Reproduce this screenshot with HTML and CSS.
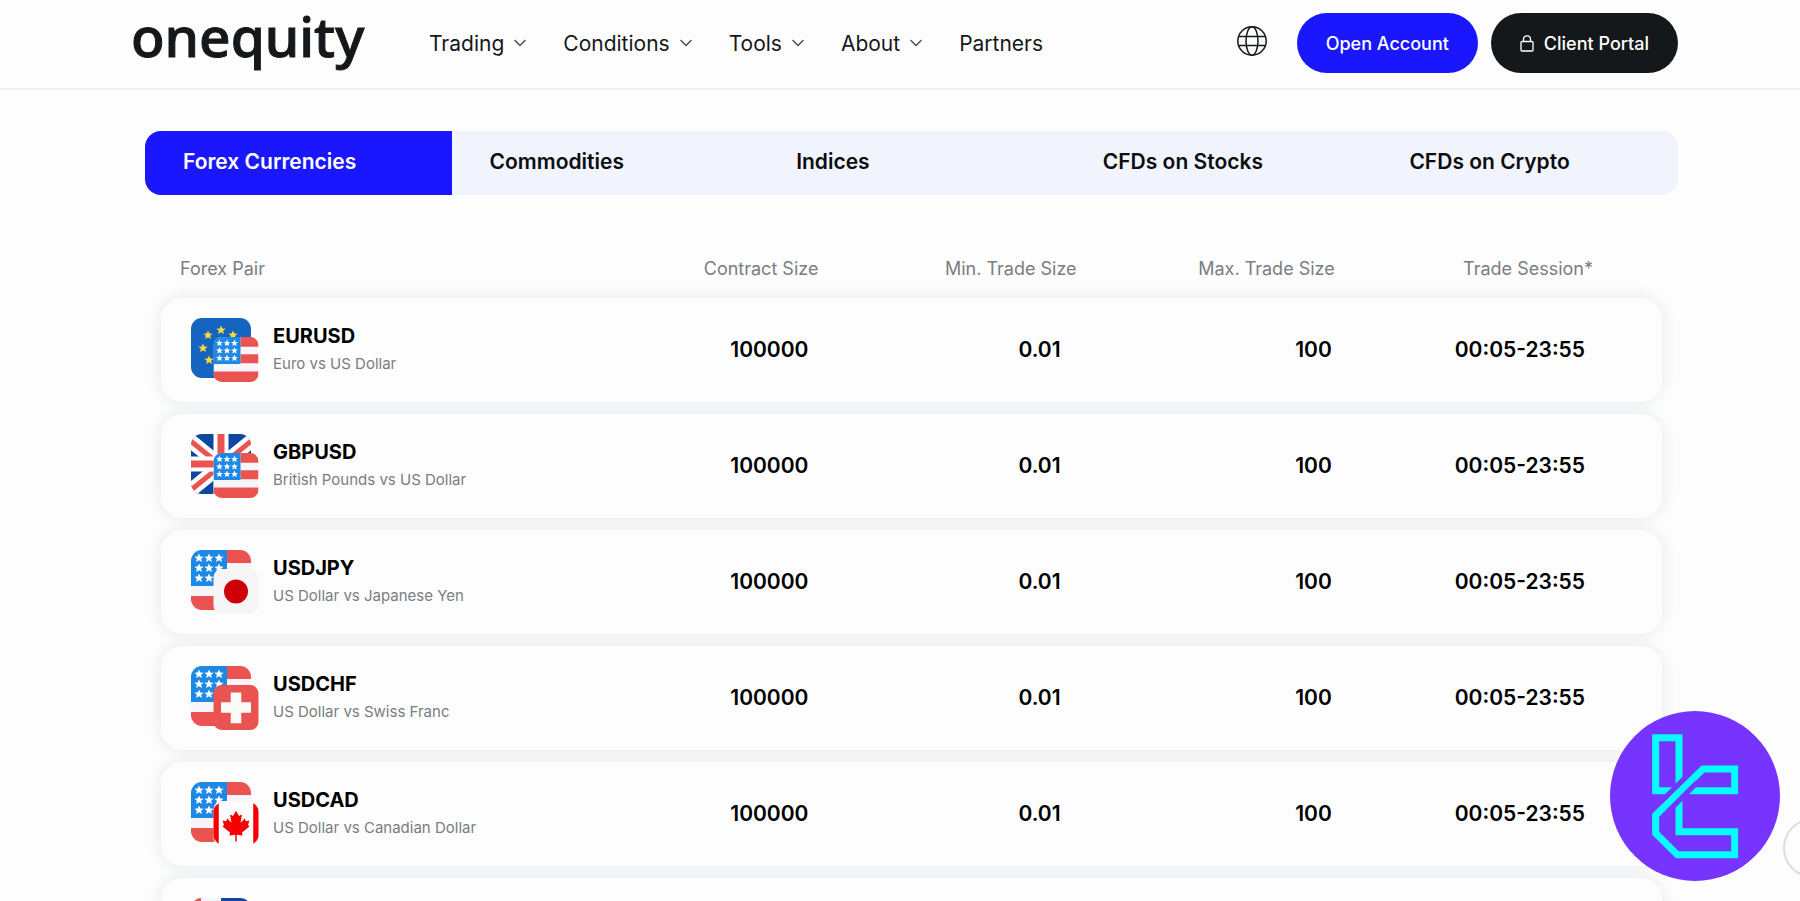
FILE: index.html
```
<!DOCTYPE html>
<html lang="en">
<head>
    <meta charset="UTF-8">
    <meta name="viewport" content="width=device-width, initial-scale=1.0">
    <title>Onequity - Forex Currencies</title>
    <link rel="stylesheet" href="styles.css">
</head>
<body>
    <!-- Shared flags -->
    <svg class="sprite" aria-hidden="true">
        <defs>
            <clipPath id="round"><rect width="60" height="60" rx="11"/></clipPath>
            <path id="star" d="M0-4.6 1.3-1.5 4.6-1.3 2.1.8 2.900 4 0 2.200-2.900 4-2.100.8-4.600-1.300-1.300-1.500z"/>
            <symbol id="us" viewBox="0 0 60 60">
                <g clip-path="url(#round)">
                    <rect width="60" height="60" fill="#f6f6fa"/>
                    <path fill="#eb5350" d="M36 0h24v13H36zM36 23h24v12H36zM0 46h60v14H0z"/>
                    <rect width="36" height="36" fill="#1e88e5"/>
                    <g fill="#fff">
                        <use href="#star" x="8" y="8"/><use href="#star" x="18" y="8"/><use href="#star" x="28" y="8"/>
                        <use href="#star" x="8" y="18"/><use href="#star" x="18" y="18"/><use href="#star" x="28" y="18"/>
                        <use href="#star" x="8" y="28"/><use href="#star" x="18" y="28"/><use href="#star" x="28" y="28"/>
                    </g>
                </g>
            </symbol>
            <symbol id="eu" viewBox="0 0 60 60">
                <rect width="60" height="60" rx="11" fill="#1565c0"/>
                <g fill="#fddb3a">
                    <use href="#star" x="30" y="12"/><use href="#star" x="42" y="17"/><use href="#star" x="48" y="30"/>
                    <use href="#star" x="43" y="42"/><use href="#star" x="30" y="47"/><use href="#star" x="18" y="42"/>
                    <use href="#star" x="12" y="30"/><use href="#star" x="17" y="17"/>
                </g>
            </symbol>
            <symbol id="gb" viewBox="0 0 60 60">
                <g clip-path="url(#round)">
                    <rect width="60" height="60" fill="#0d47a1"/>
                    <path stroke="#fff" stroke-width="14" d="M-4 4 60 56M64 4 0 56"/>
                    <path stroke="#eb5350" stroke-width="5" d="M-4 4 60 56M64 4 0 56"/>
                    <path stroke="#fff" stroke-width="15" d="M30 0v60M0 30h60"/>
                    <path stroke="#eb5350" stroke-width="7" d="M30 0v60M0 30h60"/>
                </g>
            </symbol>
            <symbol id="jp" viewBox="0 0 60 60">
                <rect width="60" height="60" rx="11" fill="#f6f6f6"/>
                <circle cx="30" cy="30" r="16" fill="#d00009"/>
            </symbol>
            <symbol id="ch" viewBox="0 0 60 60">
                <rect width="60" height="60" rx="11" fill="#eb5350"/>
                <path fill="#fafafa" d="M23 10h14v13h13v14H37v14H23V37H10V23h13z"/>
            </symbol>
            <symbol id="ca" viewBox="0 0 60 60">
                <rect width="60" height="60" rx="11" fill="#fdfdfd"/>
                <path fill="#f50000" d="M7 3v54Q0 52 0 46V14Q0 7 7 3zM53 3v54Q60 52 60 46V14Q60 7 53 3z"/>
                <path fill="#f50000" d="m30 13-4 7-4-2 2 11-6-6-1 4-5-1 2 6-2 2 10 8-1 4 8-1v9h2v-9l8 1-1-4 10-8-2-2 2-6-5 1-1-4-6 6 2-11-4 2z"/>
            </symbol>
            <symbol id="au" viewBox="0 0 60 60">
                <g clip-path="url(#round)">
                    <rect width="60" height="60" fill="#0d47a1"/>
                    <rect width="30" height="30" fill="#f6f6fa"/>
                    <path fill="#eb5350" d="M0 0h10v3L0 8zM11 12h6v18h-6zM0 13h30v5H0z"/>
                    <g fill="#fff"><use href="#star" x="15" y="45"/><use href="#star" x="45" y="15"/></g>
                </g>
            </symbol>
            <symbol id="chevron" viewBox="0 0 12 8">
                <path fill="none" stroke="#45494d" stroke-width="1.3" d="m.5 1 5.500 5.500L11.500 1"/>
            </symbol>
        </defs>
    </svg>

    <header class="header">
        <div class="header-inner">
            <a class="logo" href="#">onequity</a>
            <nav class="nav">
                <a href="#">Trading <svg class="chevron"><use href="#chevron"/></svg></a>
                <a href="#">Conditions <svg class="chevron"><use href="#chevron"/></svg></a>
                <a href="#">Tools <svg class="chevron"><use href="#chevron"/></svg></a>
                <a href="#">About <svg class="chevron"><use href="#chevron"/></svg></a>
                <a href="#">Partners</a>
            </nav>
            <div class="actions">
                <button class="lang" aria-label="Language">
                    <svg width="30" height="30" viewBox="0 0 30 30" fill="none" stroke="#15181a" stroke-width="1.5">
                        <circle cx="15" cy="15" r="14.200"/>
                        <ellipse cx="15" cy="15" rx="6" ry="14.200"/>
                        <path d="M2 10.500h26M2 19.500h26"/>
                    </svg>
                </button>
                <button class="btn btn-open">Open Account</button>
                <button class="btn btn-portal">
                    <svg width="14" height="17" viewBox="0 0 14 17" fill="none" stroke="#fff" stroke-width="1.3">
                        <rect x="1" y="6.500" width="12" height="9.500" rx="1"/>
                        <path d="M3.500 6.500V4a3.500 3.200 0 0 1 7 0v2.500"/>
                    </svg>
                    Client Portal
                </button>
            </div>
        </div>
    </header>

    <main class="main">
        <div class="tabs">
            <button class="tab active">Forex Currencies</button>
            <button class="tab">Commodities</button>
            <button class="tab">Indices</button>
            <button class="tab">CFDs on Stocks</button>
            <button class="tab">CFDs on Crypto</button>
        </div>

        <table class="pairs">
            <thead>
                <tr>
                    <th class="col-pair">Forex Pair</th>
                    <th class="col-size">Contract Size</th>
                    <th class="col-size">Min. Trade Size</th>
                    <th class="col-size">Max. Trade Size</th>
                    <th class="col-session">Trade Session*</th>
                </tr>
            </thead>
            <tbody>
                <tr>
                    <td>
                        <div class="pair">
                            <div class="flags"><svg class="flag-back"><use href="#eu"/></svg><svg class="flag-front"><use href="#us"/></svg></div>
                            <div><div class="symbol">EURUSD</div><div class="desc">Euro vs US Dollar</div></div>
                        </div>
                    </td>
                    <td class="contract">100000</td>
                    <td class="min">0.01</td>
                    <td class="max">100</td>
                    <td class="session">00:05-23:55</td>
                </tr>
                <tr>
                    <td>
                        <div class="pair">
                            <div class="flags"><svg class="flag-back"><use href="#gb"/></svg><svg class="flag-front"><use href="#us"/></svg></div>
                            <div><div class="symbol">GBPUSD</div><div class="desc">British Pounds vs US Dollar</div></div>
                        </div>
                    </td>
                    <td class="contract">100000</td>
                    <td class="min">0.01</td>
                    <td class="max">100</td>
                    <td class="session">00:05-23:55</td>
                </tr>
                <tr>
                    <td>
                        <div class="pair">
                            <div class="flags"><svg class="flag-back"><use href="#us"/></svg><svg class="flag-front"><use href="#jp"/></svg></div>
                            <div><div class="symbol">USDJPY</div><div class="desc">US Dollar vs Japanese Yen</div></div>
                        </div>
                    </td>
                    <td class="contract">100000</td>
                    <td class="min">0.01</td>
                    <td class="max">100</td>
                    <td class="session">00:05-23:55</td>
                </tr>
                <tr>
                    <td>
                        <div class="pair">
                            <div class="flags"><svg class="flag-back"><use href="#us"/></svg><svg class="flag-front"><use href="#ch"/></svg></div>
                            <div><div class="symbol">USDCHF</div><div class="desc">US Dollar vs Swiss Franc</div></div>
                        </div>
                    </td>
                    <td class="contract">100000</td>
                    <td class="min">0.01</td>
                    <td class="max">100</td>
                    <td class="session">00:05-23:55</td>
                </tr>
                <tr>
                    <td>
                        <div class="pair">
                            <div class="flags"><svg class="flag-back"><use href="#us"/></svg><svg class="flag-front"><use href="#ca"/></svg></div>
                            <div><div class="symbol">USDCAD</div><div class="desc">US Dollar vs Canadian Dollar</div></div>
                        </div>
                    </td>
                    <td class="contract">100000</td>
                    <td class="min">0.01</td>
                    <td class="max">100</td>
                    <td class="session">00:05-23:55</td>
                </tr>
                <tr>
                    <td>
                        <div class="pair">
                            <div class="flags"><svg class="flag-back"><use href="#au"/></svg><svg class="flag-front"><use href="#us"/></svg></div>
                        </div>
                    </td>
                    <td class="contract"></td>
                    <td class="min"></td>
                    <td class="max"></td>
                    <td class="session"></td>
                </tr>
            </tbody>
        </table>
    </main>

    <!-- Floating elements -->
    <button class="scroll-top" aria-label="Back to top"></button>
    <svg class="badge" viewBox="0 0 510 510" aria-hidden="true">
        <circle cx="255" cy="255" r="255" fill="#7733ff"/>
        <g fill="none" stroke="#00ffff" stroke-width="21">
            <path d="M207 217V80h-70v159h51"/>
            <path d="M237 239h137v-65h-95L137 313v54l65 64h172v-69H207v-93"/>
        </g>
        <path d="M155 270 240 185" stroke="#7733ff" stroke-width="14"/>
        <path d="M175 301 262 214" stroke="#7733ff" stroke-width="15"/>
    </svg>
</body>
</html>
```
FILE: styles.css
```
* {
    box-sizing: border-box;
}
body {
    margin: 0;
    background-color: #fdfdfd;
    color: #000;
    font-family: Inter, "Liberation Sans", sans-serif;
}
a {
    color: inherit;
    text-decoration: none;
}
button {
    border: 0;
    padding: 0;
    font-family: inherit;
    cursor: pointer;
}
.sprite {
    position: absolute;
    width: 0;
    height: 0;
}

/* Header */
.header {
    border-bottom: 2px solid #eee;
}
.header-inner {
    display: flex;
    align-items: center;
    height: 88px;
    padding: 0 122px 2px 131px;
}
.logo {
    width: 298px;
    padding-bottom: 14px;
    color: #15181a;
    font-family: "Noto Sans", sans-serif;
    font-size: 55px;
    font-weight: 500;
    line-height: 72px;
    -webkit-text-stroke: 1px #15181a;
}
.nav {
    display: flex;
    gap: 37px;
    color: #15181a;
    font-size: 21px;
}
.nav a {
    display: flex;
    align-items: center;
    gap: 10px;
}
.chevron {
    width: 12px;
    height: 8px;
}
.actions {
    display: flex;
    align-items: center;
    margin-left: auto;
}
.lang {
    height: 34px;
    margin-right: 30px;
    padding-bottom: 4px;
    background: none;
}
.btn {
    display: flex;
    align-items: center;
    justify-content: center;
    gap: 10px;
    height: 60px;
    padding: 0 29px;
    border-radius: 30px;
    color: #fff;
    font-size: 18px;
    font-weight: 500;
}
.btn-open {
    background-color: #1a17ff;
}
.btn-portal {
    margin-left: 13px;
    background-color: #15181a;
}

/* Tabs */
.main {
    padding: 41px 122px 0 145px;
}
.tabs {
    display: grid;
    grid-template-columns: repeat(5, 1fr);
    border-radius: 16px;
    background-color: #f1f4fd;
    overflow: hidden;
}
.tab {
    height: 64px;
    padding: 0 38px 4px;
    background: none;
    color: #0b0d0f;
    font-size: 21px;
    font-weight: 600;
    text-align: left;
}
.tab.active {
    background-color: #1a17ff;
    color: #fff;
}

/* Table */
.pairs {
    width: calc(100% - 32px);
    margin: 44px 16px 0;
    border-collapse: separate;
    border-spacing: 0 12px;
    table-layout: fixed;
}
th {
    height: 35px;
    padding: 0;
    color: #7a7e82;
    font-size: 18px;
    font-weight: 400;
    text-align: right;
}
.col-pair {
    width: 26.6%;
    padding-left: 19px;
    text-align: left;
}
.col-size {
    width: 17.2%;
}
.col-session {
    padding-right: 69px;
}
tbody tr {
    border-radius: 22px;
    box-shadow: 0 0 16px #e4e8ec;
}
td {
    height: 104px;
    padding: 0 0 2px;
    background-color: #fdfdfd;
    font-size: 21px;
    font-weight: 600;
    text-align: right;
}
td:first-child {
    padding: 0 0 0 30px;
    border-radius: 22px 0 0 22px;
    text-align: left;
}
td:last-child {
    border-radius: 0 22px 22px 0;
}
.contract {
    padding-right: 10px;
}
.min {
    padding-right: 16px;
}
.max {
    padding-right: 3px;
}
.session {
    padding-right: 77px;
}
.pair {
    display: flex;
    align-items: center;
    gap: 14px;
}
.flags {
    position: relative;
    width: 68px;
    height: 64px;
}
.flag-back {
    display: block;
    width: 60px;
    height: 60px;
}
.flag-front {
    position: absolute;
    right: 0;
    bottom: 0;
    width: 46px;
    height: 45px;
}
.symbol {
    font-size: 20px;
    font-weight: 700;
    line-height: 28px;
}
.desc {
    color: #7a7e82;
    font-size: 15px;
    font-weight: 400;
    line-height: 28px;
    white-space: nowrap;
}

/* Floating */
.badge {
    position: fixed;
    right: 20px;
    bottom: 20px;
    width: 170px;
    height: 170px;
}
.scroll-top {
    position: fixed;
    right: -43px;
    bottom: 23px;
    width: 60px;
    height: 60px;
    border: 2px solid #ddd;
    border-radius: 50%;
    background-color: #fdfdfd;
}
```
